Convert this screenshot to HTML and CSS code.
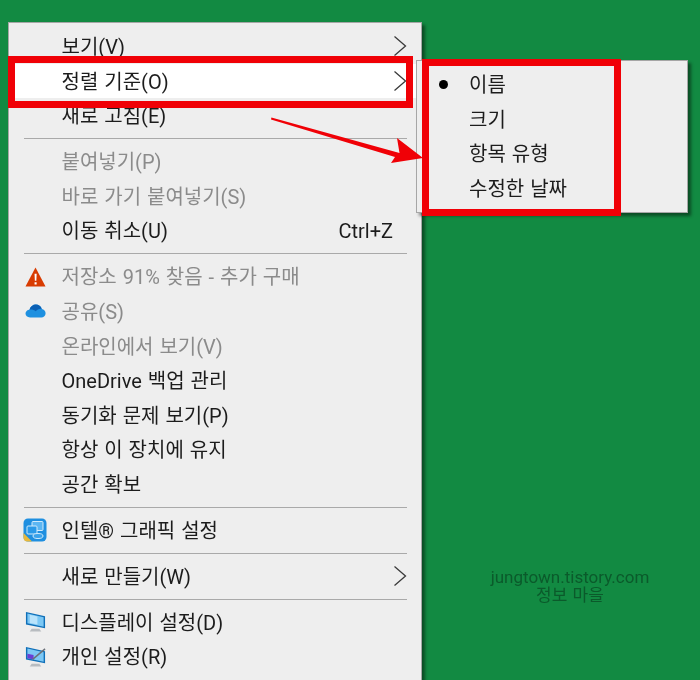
FILE: index.html
```html
<!DOCTYPE html>
<html lang="ko">
<head>
<meta charset="utf-8">
<title>바탕 화면 메뉴</title>
<link rel="stylesheet" href="styles.css">
</head>
<body>
<main class="desktop">
  <nav class="menu menu-main">
    <div class="row"><span class="slot"></span><span class="label">보기(V)</span><svg class="chev" viewBox="0 0 14 22"><path d="M1.5 1.5 12.5 11 1.5 20.5"/></svg></div>
    <div class="row row-active"><span class="slot"></span><span class="label">정렬 기준(O)</span><svg class="chev" viewBox="0 0 14 22"><path d="M1.5 1.5 12.5 11 1.5 20.5"/></svg></div>
    <div class="row"><span class="slot"></span><span class="label">새로 고침(E)</span></div>
    <hr class="sep">
    <div class="row off"><span class="slot"></span><span class="label">붙여넣기(P)</span></div>
    <div class="row off"><span class="slot"></span><span class="label">바로 가기 붙여넣기(S)</span></div>
    <div class="row"><span class="slot"></span><span class="label">이동 취소(U)</span><span class="key">Ctrl+Z</span></div>
    <hr class="sep">
    <div class="row off"><span class="slot"><svg class="ico" viewBox="0 0 22 22"><path fill="#d83b01" d="M11 1 21.500 21H.5z"/><path fill="#fff" d="M10 7.500h2.200l-.3 7.500h-1.600zM10 16.500h2.200v2.400H10z"/></svg></span><span class="label">저장소 91% 찾음 - 추가 구매</span></div>
    <div class="row off"><span class="slot"><svg class="ico ico-cloud" viewBox="0 0 21 14"><path fill="#1e90e0" d="M5 13.500C2.300 13.500.5 11.800.5 9.600c0-2.200 1.700-3.800 3.900-3.900C5.400 2.500 8 .5 10.800.5c2.900 0 5.200 1.800 6 4.400 2.200.3 3.800 2.200 3.800 4.400 0 2.400-1.900 4.200-4.300 4.200z"/><path fill="#0a5fb4" d="M4.400 5.700C5.400 2.500 8 .5 10.800.5c2.900 0 5.200 1.800 6 4.400-2.600-.4-4.600.6-6 2.400-1.700-1.300-4-2-6.400-1.600z"/></svg></span><span class="label">공유(S)</span></div>
    <div class="row off"><span class="slot"></span><span class="label">온라인에서 보기(V)</span></div>
    <div class="row"><span class="slot"></span><span class="label">OneDrive 백업 관리</span></div>
    <div class="row"><span class="slot"></span><span class="label">동기화 문제 보기(P)</span></div>
    <div class="row"><span class="slot"></span><span class="label">항상 이 장치에 유지</span></div>
    <div class="row"><span class="slot"></span><span class="label">공간 확보</span></div>
    <hr class="sep">
    <div class="row"><span class="slot"><svg class="ico ico-wide" viewBox="0 0 24 24"><rect x=".5" y=".5" width="23" height="23" rx="4.500" fill="#1f8fe0"/><path fill="#e8b93c" d="M.5 15 9 23.500H4.500a4 4 0 0 1-4-4z"/><rect x="9" y="3.500" width="11" height="9" rx="1" fill="#5cb6f2" stroke="#cfeafc"/><rect x="4" y="8" width="10" height="8" rx="1" fill="#2a9ae8" stroke="#cfeafc"/><ellipse cx="15" cy="18" rx="5" ry="2.500" fill="#3aa2ea" stroke="#cfeafc"/></svg></span><span class="label">인텔® 그래픽 설정</span></div>
    <hr class="sep">
    <div class="row"><span class="slot"></span><span class="label">새로 만들기(W)</span><svg class="chev" viewBox="0 0 14 22"><path d="M1.500 1.500 12.500 11 1.500 20.500"/></svg></div>
    <hr class="sep">
    <div class="row"><span class="slot"><svg class="ico" viewBox="0 0 22 23"><path fill="#0f6fb8" d="M1 1 21 5.500V18L1 14z"/><path fill="#7cc8f5" d="M2.500 2.500 19.500 6.500V16.500L2.500 12.800z"/><path fill="#b9e3fb" d="M5 4 13 5.800V14L5 12.500z"/><path fill="#b8bcc0" d="M7 18.500h8l2 3H5z"/></svg></span><span class="label">디스플레이 설정(D)</span></div>
    <div class="row"><span class="slot"><svg class="ico" viewBox="0 0 22 23"><path fill="#0f6fb8" d="M1 1 21 5.500V18L1 14z"/><path fill="#7cc8f5" d="M2.500 2.500 19.500 6.500V16.500L2.500 12.800z"/><path fill="#6a3fd4" d="M2.500 8 9 9.500V14L2.500 12.800z"/><path stroke="#6b7078" stroke-width="1.500" d="M8 14 21 3"/><path fill="#b8bcc0" d="M7 18.500h8l2 3H5z"/></svg></span><span class="label">개인 설정(R)</span></div>
  </nav>

  <nav class="menu menu-sub">
    <div class="row"><span class="slot slot-sub"><span class="bullet"></span></span><span class="label">이름</span></div>
    <div class="row"><span class="slot slot-sub"></span><span class="label">크기</span></div>
    <div class="row"><span class="slot slot-sub"></span><span class="label">항목 유형</span></div>
    <div class="row"><span class="slot slot-sub"></span><span class="label">수정한 날짜</span></div>
  </nav>

  <div class="mark mark-row"></div>
  <div class="mark mark-sub"></div>
  <svg class="arrow" viewBox="0 0 160 50"><path fill="#f00006" d="M.4 .5 128.500 36 126 21 152 41 120 46 124 40 0 2.500z"/></svg>

  <p class="stamp">jungtown.tistory.com<br>정보 마을</p>
</main>
</body>
</html>
```
FILE: styles.css
```css
html, body {
  margin: 0;
  height: 100%;
  overflow: hidden;
}

.desktop {
  position: relative;
  width: 700px;
  height: 680px;
  overflow: hidden;
  background: #128a42;
  font-family: Roboto, "Noto Sans CJK KR", sans-serif;
  font-size: 20px;
  word-spacing: 1px;
  color: #1c1c1c;
}

.menu {
  position: absolute;
  box-sizing: border-box;
  background: #eeeeee;
  border: 1px solid #a6a6a6;
  box-shadow: 3px 3px 3px rgba(0, 0, 0, 0.45);
}

.menu-main {
  left: 8px;
  top: 22px;
  width: 414px;
  height: 700px;
  padding: 6px 0;
}

.menu-sub {
  left: 416px;
  top: 60px;
  width: 272px;
  height: 153px;
  padding: 6px 0;
}

.row {
  display: flex;
  align-items: center;
  height: 34.6px;
  line-height: 34.6px;
  padding-right: 14px;
}

.row-active {
  background: #ffffff;
}

.off {
  color: #8b8b8b;
}

.slot {
  flex: none;
  display: flex;
  align-items: center;
  justify-content: center;
  width: 52.500px;
  box-sizing: border-box;
}

.slot-sub {
  justify-content: flex-start;
  width: 52px;
  padding-left: 22px;
}

.label {
  flex: 1;
  padding-top: 2px;
  white-space: nowrap;
  filter: blur(0.35px);
}

.key {
  flex: none;
  padding-top: 2px;
  padding-right: 14px;
  filter: blur(0.35px);
}

.chev {
  flex: none;
  width: 14px;
  height: 22px;
  fill: none;
  stroke: #3a3a3a;
  stroke-width: 1.3;
}

.ico {
  display: block;
  width: 21px;
  height: 22px;
}

.ico-cloud {
  height: 14px;
}

.ico-wide {
  width: 24px;
  height: 24px;
}

.bullet {
  display: block;
  width: 9px;
  height: 9px;
  border-radius: 50%;
  background: #000;
}

.sep {
  height: 1px;
  margin: 5.2px 14px 5.2px 15px;
  border: 0;
  background: #a9a9a9;
}

.mark {
  position: absolute;
  box-sizing: border-box;
  border: 7px solid #f00006;
}

.mark-row {
  left: 8px;
  top: 56px;
  width: 405px;
  height: 52px;
}

.mark-sub {
  left: 422px;
  top: 59px;
  width: 199px;
  height: 157px;
}

.arrow {
  position: absolute;
  left: 271px;
  top: 117px;
  width: 160px;
  height: 50px;
}

.stamp {
  position: absolute;
  left: 470px;
  top: 568px;
  width: 200px;
  margin: 0;
  text-align: center;
  font-size: 17px;
  line-height: 18px;
  color: #0b5a2b;
  filter: blur(0.35px);
}
```
